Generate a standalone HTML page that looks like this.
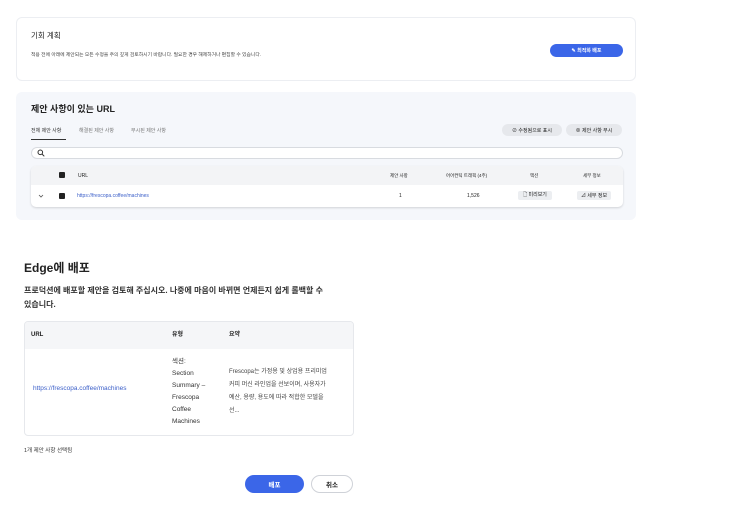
<!DOCTYPE html>
<html><head><meta charset="utf-8"><style>
*{margin:0;padding:0;box-sizing:border-box}
body{width:750px;height:509px;background:#fff;font-family:"Liberation Sans","Noto Sans CJK KR",sans-serif;color:#222;position:relative;overflow:hidden}
.a{position:absolute;white-space:nowrap;line-height:1.2}
.btn{position:absolute;border-radius:8px;display:flex;align-items:center;justify-content:center;font-size:5px}
</style></head><body>
<div class="a" style="left:16px;top:17px;width:620px;height:64px;border:1px solid #eceef2;border-radius:6px;background:#fff"></div>
<div class="a" style="left:31px;top:31px;font-size:7.5px">기회 계획</div>
<div class="a" style="left:31px;top:53px;font-size:4.8px;color:#444">적용 전에 아래에 제안되는 모든 수정을 주의 깊게 검토하시기 바랍니다. 필요한 경우 해제하거나 편집할 수 있습니다.</div>
<div class="btn" style="left:550px;top:44px;width:73px;height:13px;background:#3b66e8;color:#fff;font-weight:bold">✎ 최적화 배포</div>

<div class="a" style="left:16px;top:92px;width:620px;height:128px;background:#f5f7fb;border-radius:6px"></div>
<div class="a" style="left:31px;top:104px;font-size:9px;font-weight:bold">제안 사항이 있는 URL</div>
<div class="a" style="left:31px;top:128px;font-size:5px;color:#333">전체 제안 사항</div>
<div class="a" style="left:31px;top:139px;width:35px;height:1px;background:#333"></div>
<div class="a" style="left:79px;top:128px;font-size:5px;color:#777">해결된 제안 사항</div>
<div class="a" style="left:131px;top:128px;font-size:5px;color:#777">무시된 제안 사항</div>
<div class="btn" style="left:502px;top:124px;width:60px;height:12px;background:#e6e8ec;color:#222">⊘ 수정됨으로 표시</div>
<div class="btn" style="left:566px;top:124px;width:56px;height:12px;background:#e6e8ec;color:#222">⊗ 제안 사항 무시</div>
<div class="a" style="left:31px;top:147px;width:592px;height:12px;background:#fff;border:1px solid #d8dbe0;border-radius:7px"></div>
<svg class="a" style="left:37px;top:149px" width="8" height="8" viewBox="0 0 8 8"><circle cx="3.3" cy="3.3" r="2.3" fill="none" stroke="#333" stroke-width="1"/><path d="M5 5L7.3 7.3" stroke="#333" stroke-width="1"/></svg>
<div class="a" style="left:31px;top:166px;width:592px;height:41px;background:#fff;border-radius:5px;box-shadow:0 1px 2px rgba(0,0,0,.15);overflow:hidden"><div style="height:19px;background:#f3f4f6"></div></div>
<div class="a" style="left:59px;top:172px;width:6px;height:6px;background:#222;border-radius:1px"></div>
<div class="a" style="left:59px;top:193px;width:6px;height:6px;background:#222;border-radius:1px"></div>
<div class="a" style="left:78px;top:173px;font-size:5px">URL</div>
<div class="a" style="left:390px;top:173px;font-size:4.5px">제안 사항</div>
<div class="a" style="left:446px;top:173px;font-size:4.5px">어어컨틱 트래픽 (4주)</div>
<div class="a" style="left:530px;top:173px;font-size:4.5px">액션</div>
<div class="a" style="left:583px;top:173px;font-size:4.5px">세부 정보</div>
<svg class="a" style="left:38px;top:194px" width="6" height="4" viewBox="0 0 6 4"><path d="M1 1L3 3L5 1" fill="none" stroke="#555" stroke-width=".8"/></svg>
<div class="a" style="left:77px;top:193px;font-size:5px;color:#3b5fc9">https://frescopa.coffee/machines</div>
<div class="a" style="left:399px;top:193px;font-size:5px">1</div>
<div class="a" style="left:467px;top:193px;font-size:5px">1,526</div>
<div class="btn" style="left:518px;top:191px;width:34px;height:9px;background:#eceef1;border-radius:2px">🗋 미리보기</div>
<div class="btn" style="left:577px;top:191px;width:34px;height:9px;background:#eceef1;border-radius:2px">⊿ 세부 정보</div>

<div class="a" style="left:24px;top:261px;font-size:12px;font-weight:bold">Edge에 배포</div>
<div class="a" style="left:24px;top:286px;font-size:8px;font-weight:bold;color:#333">프로덕션에 배포할 제안을 검토해 주십시오. 나중에 마음이 바뀌면 언제든지 쉽게 롤백할 수</div>
<div class="a" style="left:24px;top:300px;font-size:8px;font-weight:bold;color:#333">있습니다.</div>
<div class="a" style="left:24px;top:321px;width:330px;height:115px;border:1px solid #e6e8ec;border-radius:4px;overflow:hidden"><div style="height:27px;background:#f5f6f8"></div></div>
<div class="a" style="left:31px;top:331px;font-size:6px;font-weight:bold;line-height:8px">URL</div>
<div class="a" style="left:172px;top:331px;font-size:6px;font-weight:bold;line-height:8px">유형</div>
<div class="a" style="left:229px;top:331px;font-size:6px;font-weight:bold;line-height:8px">요약</div>
<div class="a" style="left:33px;top:385px;font-size:6.5px;color:#3b5fc9">https://frescopa.coffee/machines</div>
<div class="a" style="left:172px;top:356px;font-size:6.5px;line-height:12px;color:#333">섹션:<br>Section<br>Summary –<br>Frescopa<br>Coffee<br>Machines</div>
<div class="a" style="left:229px;top:366px;font-size:6px;line-height:13px;color:#444">Frescopa는 가정용 및 상업용 프리미엄<br>커피 머신 라인업을 선보이며, 사용자가<br>예산, 용량, 용도에 따라 적합한 모델을<br>선...</div>
<div class="a" style="left:24px;top:448px;font-size:5.5px;color:#333">1개 제안 사항 선택됨</div>
<div class="btn" style="left:245px;top:475px;width:59px;height:18px;background:#3b66e8;color:#fff;font-size:6.5px;font-weight:bold;border-radius:9px">배포</div>
<div class="btn" style="left:311px;top:475px;width:42px;height:18px;background:#fff;border:1px solid #cfd2d8;font-size:6.5px;font-weight:bold;border-radius:9px">취소</div>
</body></html>
